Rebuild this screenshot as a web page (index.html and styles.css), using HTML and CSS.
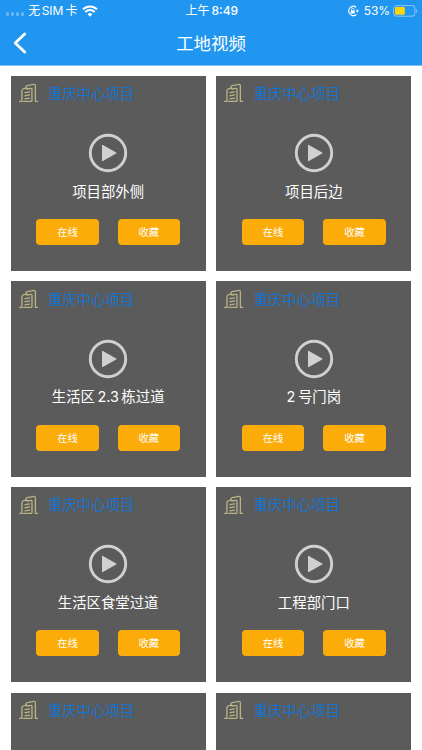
FILE: index.html
```
<!DOCTYPE html>
<html lang="zh-CN">
<head>
<meta charset="utf-8">
<title>工地视频</title>
<link rel="stylesheet" href="styles.css">
</head>
<body>
<svg class="defs" aria-hidden="true">
  <symbol id="building" viewBox="0 0 20 20">
    <path d="M.7 18.6H3V7.7Q3 6 5 5.6L8 5M6.9 5V4.2Q6.9 2.7 8.5 2.4L15.2 1.2Q16.8 1 16.8 2.5V18.6H19.3M4.8 18.6H12.5Q13.3 18.6 13.3 17.6V6.1Q13.3 5 12.2 5.2L8 5.9M6.2 9.6 10.8 8.8M6.2 12.8 10.8 12M6.2 16 10.8 15.2"/>
  </symbol>
  <symbol id="play" viewBox="0 0 40 40">
    <circle cx="20" cy="20" r="17.7"/>
    <path d="M14.6 12.4V27.6L27.9 20Z"/>
  </symbol>
</svg>
<header class="header">
  <div class="status">
    <div class="carrier">
      <span class="dots"><i></i><i></i><i></i><i></i></span>
      <span class="sim">无<b>SIM</b>卡</span>
      <svg class="wifi" viewBox="0 0 16 12"><path d="M8 11.7 5.6 9.2A3.4 3.4 0 0 1 10.4 9.2Z" fill="#fff"/><path d="M3.3 7A6.7 6.7 0 0 1 12.7 7M1 4.4A10 10 0 0 1 15 4.4" fill="none" stroke="#fff" stroke-width="2"/></svg>
    </div>
    <div class="time">上午<b>8:49</b></div>
    <div class="power">
      <svg class="lock" viewBox="0 0 12 12"><path d="M9.2 2.3A4.6 4.6 0 1 0 9.4 9.5M10.1 4.4Q10.5 5.2 10.4 6.4" fill="none" stroke="#fff" stroke-width="1.1"/><path d="M8.7 5.6H12L10.4 7.8Z" fill="#fff"/><rect x="3.7" y="5.4" width="4" height="3.1" rx=".4" fill="#fff"/><path d="M4.5 5.6V4.5A1.2 1.2 0 0 1 6.9 4.5V5.6" fill="none" stroke="#fff" stroke-width=".8"/></svg>
      <span class="percent">53%</span>
      <svg class="battery" viewBox="0 0 25 12"><rect x=".6" y=".6" width="21.3" height="10.6" rx="2.8" fill="none" stroke="#8bc7f9"/><rect x="2" y="2" width="9.8" height="7.8" rx="1.2" fill="#fdd50b"/><path d="M23.3 4V8Q24.5 7.4 24.5 6T23.3 4" fill="#8bc7f9"/></svg>
    </div>
  </div>
  <div class="nav">
    <svg class="back" viewBox="0 0 14 22"><path d="M11.7 2 2.2 11 11.7 20"/></svg>
    <h1>工地视频</h1>
  </div>
</header>
<main class="grid">
  <article class="card">
    <div class="project"><svg><use href="#building"/></svg><span>重庆中心项目</span></div>
    <svg class="play"><use href="#play"/></svg>
    <h2>项目部外侧</h2>
    <div class="actions"><button>在线</button><button>收藏</button></div>
  </article>
  <article class="card">
    <div class="project"><svg><use href="#building"/></svg><span>重庆中心项目</span></div>
    <svg class="play"><use href="#play"/></svg>
    <h2>项目后边</h2>
    <div class="actions"><button>在线</button><button>收藏</button></div>
  </article>
  <article class="card">
    <div class="project"><svg><use href="#building"/></svg><span>重庆中心项目</span></div>
    <svg class="play"><use href="#play"/></svg>
    <h2>生活区<span class="num">2.3</span>栋过道</h2>
    <div class="actions"><button>在线</button><button>收藏</button></div>
  </article>
  <article class="card">
    <div class="project"><svg><use href="#building"/></svg><span>重庆中心项目</span></div>
    <svg class="play"><use href="#play"/></svg>
    <h2><span class="num first">2</span>号门岗</h2>
    <div class="actions"><button>在线</button><button>收藏</button></div>
  </article>
  <article class="card">
    <div class="project"><svg><use href="#building"/></svg><span>重庆中心项目</span></div>
    <svg class="play"><use href="#play"/></svg>
    <h2>生活区食堂过道</h2>
    <div class="actions"><button>在线</button><button>收藏</button></div>
  </article>
  <article class="card">
    <div class="project"><svg><use href="#building"/></svg><span>重庆中心项目</span></div>
    <svg class="play"><use href="#play"/></svg>
    <h2>工程部门口</h2>
    <div class="actions"><button>在线</button><button>收藏</button></div>
  </article>
  <article class="card">
    <div class="project"><svg><use href="#building"/></svg><span>重庆中心项目</span></div>
  </article>
  <article class="card">
    <div class="project"><svg><use href="#building"/></svg><span>重庆中心项目</span></div>
  </article>
</main>
</body>
</html>
```
FILE: styles.css
```
* { box-sizing: border-box; }
body {
  margin: 0;
  height: 750px;
  overflow: hidden;
  background: #fff;
  font-family: Inter, "Noto Sans CJK SC", sans-serif;
}
svg { display: block; flex: none; }
.defs { position: absolute; width: 0; height: 0; }
.header {
  height: 66px;
  background: #2196f0;
  border-bottom: 1px solid #7cc0f6;
  color: #fff;
}
.status {
  display: grid;
  grid-template-columns: 1fr auto 1fr;
  height: 21px;
  padding: 0 4.5px 0 6px;
  align-items: center;
  font-size: 12px;
  line-height: 21px;
}
.status b { font-weight: 400; }
.carrier, .power { display: flex; align-items: center; }
.power { justify-content: flex-end; }
.dots { display: flex; gap: 1.8px; margin: 7px 4px 0 0; }
.dots i { width: 3.2px; height: 3.2px; border-radius: 50%; background: #69b8f6; }
.sim b { margin: 0 2px 0 1.5px; }
.wifi { width: 16px; height: 12px; margin-left: 5px; }
.status .time b { margin-left: 2px; font-weight: 500; }
.lock { width: 12px; height: 12px; margin-right: 5px; }
.percent { letter-spacing: -.1px; }
.battery { width: 25px; height: 12px; margin-left: 2.5px; }
.nav {
  display: grid;
  grid-template-columns: 60px 1fr 60px;
  height: 44px;
  align-items: center;
}
.back { width: 14px; height: 22px; margin-left: 13px; }
.back path { fill: none; stroke: #fff; stroke-width: 2.8; stroke-linecap: round; stroke-linejoin: round; }
h1 { margin: 2px 0 0; font-size: 17.4px; line-height: 26px; font-weight: 400; text-align: center; }
.grid {
  display: grid;
  grid-template-columns: 195.3px 195.3px;
  grid-template-rows: repeat(3, 195.3px) 1fr;
  gap: 10.4px;
  height: 684px;
  padding: 9.8px 10.5px 0;
  overflow: hidden;
}
.card {
  display: flex;
  flex-direction: column;
  align-items: center;
  background: #5b5b5b;
}
.project {
  display: flex;
  align-items: center;
  align-self: stretch;
  height: 35px;
  padding-left: 8px;
  gap: 10px;
  color: #1674d0;
  font-size: 14.4px;
  line-height: 20px;
}
.project span { padding-top: 1.6px; }
.project svg { width: 19.5px; height: 20px; fill: none; stroke: #b9b384; stroke-width: 1.35; stroke-linejoin: round; stroke-linecap: round; }
.play { width: 40px; height: 40px; margin-top: 22.3px; }
#play circle { fill: none; stroke: #d0d0d0; stroke-width: 2.9; }
#play path { fill: #d0d0d0; stroke: #d0d0d0; stroke-width: 1.2; stroke-linejoin: round; }
h2 { margin: 8.6px 0 0; color: #fff; font-size: 14.4px; line-height: 20px; font-weight: 400; white-space: nowrap; }
.num { margin: 0 2.5px; }
.num.first { margin-left: 0; }
.actions { display: flex; gap: 19px; margin-top: 17.4px; }
button {
  width: 62.4px;
  height: 26px;
  padding: 0;
  border: 0;
  border-radius: 4px;
  background: #fbac08;
  color: #fff;
  font: 10.3px/26px "Noto Sans CJK SC", sans-serif;
}
```
